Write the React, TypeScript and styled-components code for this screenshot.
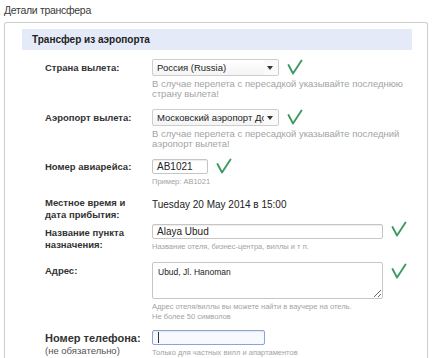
import * as React from "react";
import styled, { createGlobalStyle } from "styled-components";

const GlobalStyles = createGlobalStyle`
  html, body {
    margin: 0;
    padding: 0;
    background: #fff;
    font-family: "Liberation Sans", Arial, sans-serif;
    color: #333;
  }
`;

const Page = styled.div`
  width: 434px;
  height: 358px;
  overflow: hidden;
`;

const PageTitle = styled.div`
  font-size: 10.5px;
  line-height: 13px;
  padding: 4px 0 0 4px;
  height: 18px;
  color: #3a3a3a;
  letter-spacing: -0.3px;
`;

const Card = styled.div`
  margin-left: 4px;
  width: 424px;
  height: 340px;
  border: 1px solid #cfcfcf;
  border-bottom: none;
  border-radius: 3px 3px 0 0;
  padding-top: 6px;
  box-sizing: border-box;
  box-shadow: 0 0 2px rgba(0, 0, 0, 0.06);
`;

const SectionHeader = styled.div`
  margin: 0 15px 0 17px;
  height: 21px;
  background: #e5eaf8;
  font-size: 10px;
  font-weight: bold;
  color: #222;
  display: flex;
  align-items: center;
  padding-left: 10px;
`;

const Row = styled.div<{ $top: number }>`
  display: grid;
  grid-template-columns: 107px 1fr;
  padding-left: 40px;
  margin-top: ${(p) => p.$top}px;
`;

const Label = styled.div<{ $pad?: number; $big?: boolean }>`
  font-size: ${(p) => (p.$big ? 11 : 9.5)}px;
  font-weight: bold;
  line-height: 12px;
  color: #333;
  padding-top: ${(p) => p.$pad ?? 3}px;
`;

const LabelNote = styled.div`
  font-weight: normal;
  font-size: 9.5px;
  color: #555;
  margin-top: 1px;
`;

const Field = styled.div`
  display: flex;
  flex-direction: column;
  align-items: flex-start;
`;

const Line = styled.div`
  display: flex;
  align-items: flex-start;
  gap: 8px;
`;

const SelectBox = styled.div`
  width: 127px;
  height: 17px;
  box-sizing: border-box;
  border: 1px solid #cdcdcd;
  border-radius: 2px;
  background: linear-gradient(#fff, #f4f4f4);
  position: relative;
  font-size: 9.5px;
  line-height: 15px;
  color: #222;
  padding-left: 4px;
  overflow: hidden;
  white-space: nowrap;
`;

const SelectArrow = styled.span`
  position: absolute;
  right: 0;
  top: 0;
  width: 14px;
  height: 15px;
  background: #fafafa;
  &::after {
    content: "";
    position: absolute;
    left: 3px;
    top: 6px;
    border-left: 3.5px solid transparent;
    border-right: 3.5px solid transparent;
    border-top: 4px solid #333;
  }
`;

const TextBox = styled.div<{ $w: number; $focus?: boolean }>`
  width: ${(p) => p.$w}px;
  height: 15px;
  box-sizing: border-box;
  border: 1px solid ${(p) => (p.$focus ? "#8aa4d6" : "#c6c6c6")};
  border-radius: 2px;
  background: ${(p) => (p.$focus ? "#f7f9ff" : "#fff")};
  box-shadow: inset 0 1px 1px rgba(0, 0, 0, 0.08);
  font-size: 10px;
  line-height: 13px;
  color: #222;
  padding-left: 4px;
  position: relative;
`;

const Caret = styled.span`
  position: absolute;
  left: 5px;
  top: 1px;
  width: 1px;
  height: 11px;
  background: #333;
`;

const Area = styled.textarea`
  width: 231px;
  height: 37px;
  box-sizing: border-box;
  border: 1px solid #c6c6c6;
  border-radius: 2px;
  font-family: "Liberation Sans", Arial, sans-serif;
  font-size: 8.5px;
  line-height: 11px;
  color: #222;
  padding: 4px 5px;
  margin: 0;
  outline: none;
`;

const Hint = styled.div<{ $size?: number }>`
  font-size: ${(p) => p.$size ?? 9.5}px;
  line-height: 10px;
  color: #a3a3a3;
  margin-top: 3px;
  white-space: nowrap;
`;

const ValueText = styled.div`
  font-size: 10px;
  line-height: 11px;
  color: #222;
  padding-top: 2px;
`;

const Check = ({ top = 0 }: { top?: number }) => (
  <svg width="16" height="16" viewBox="0 0 16 16" style={{ marginTop: top }}>
    <path
      d="M1.5 6 L6 14.5 L14.5 1.5"
      fill="none"
      stroke="#3e9a60"
      strokeWidth="1.9"
      strokeLinecap="round"
      strokeLinejoin="round"
    />
  </svg>
);

export default function App() {
  return (
    <Page>
      <GlobalStyles />
      <PageTitle>Детали трансфера</PageTitle>
      <Card>
        <SectionHeader>Трансфер из аэропорта</SectionHeader>

        <Row $top={9}>
          <Label>Страна вылета:</Label>
          <Field>
            <Line>
              <SelectBox>
                Россия (Russia)
                <SelectArrow />
              </SelectBox>
              <Check top={0} />
            </Line>
            <Hint>
              В случае перелета с пересадкой указывайте последнюю
              <br />
              страну вылета!
            </Hint>
          </Field>
        </Row>

        <Row $top={10}>
          <Label>Аэропорт вылета:</Label>
          <Field>
            <Line>
              <SelectBox>
                Московский аэропорт Домодедово
                <SelectArrow />
              </SelectBox>
              <Check top={0} />
            </Line>
            <Hint>
              В случае перелета с пересадкой указывайте последний
              <br />
              аэропорт вылета!
            </Hint>
          </Field>
        </Row>

        <Row $top={10}>
          <Label $pad={2}>Номер авиарейса:</Label>
          <Field>
            <Line>
              <TextBox $w={56}>AB1021</TextBox>
              <Check top={-1} />
            </Line>
            <Hint $size={7.5}>Пример: AB1021</Hint>
          </Field>
        </Row>

        <Row $top={10}>
          <Label $pad={0}>
            Местное время и
            <br />
            дата прибытия:
          </Label>
          <Field>
            <ValueText>Tuesday 20 May 2014 в 15:00</ValueText>
          </Field>
        </Row>

        <Row $top={3}>
          <Label $pad={3}>
            Название пункта
            <br />
            назначения:
          </Label>
          <Field>
            <Line>
              <TextBox $w={231}>Alaya Ubud</TextBox>
              <Check top={-3} />
            </Line>
            <Hint $size={7.5}>Название отеля, бизнес-центра, виллы и т п.</Hint>
          </Field>
        </Row>

        <Row $top={10}>
          <Label $pad={3}>Адрес:</Label>
          <Field>
            <Line>
              <Area readOnly defaultValue="Ubud, Jl. Hanoman" />
              <Check top={1} />
            </Line>
            <Hint $size={7.5}>
              Адрес отеля/виллы вы можете найти в ваучере на отель.
              <br />
              Не более 50 символов
            </Hint>
          </Field>
        </Row>

        <Row $top={8}>
          <Label $pad={2} $big>
            Номер телефона:
            <LabelNote>(не обязательно)</LabelNote>
          </Label>
          <Field>
            <TextBox $w={113} $focus>
              <Caret />
            </TextBox>
            <Hint $size={7.5}>Только для частных вилл и апартаментов</Hint>
          </Field>
        </Row>
      </Card>
    </Page>
  );
}
